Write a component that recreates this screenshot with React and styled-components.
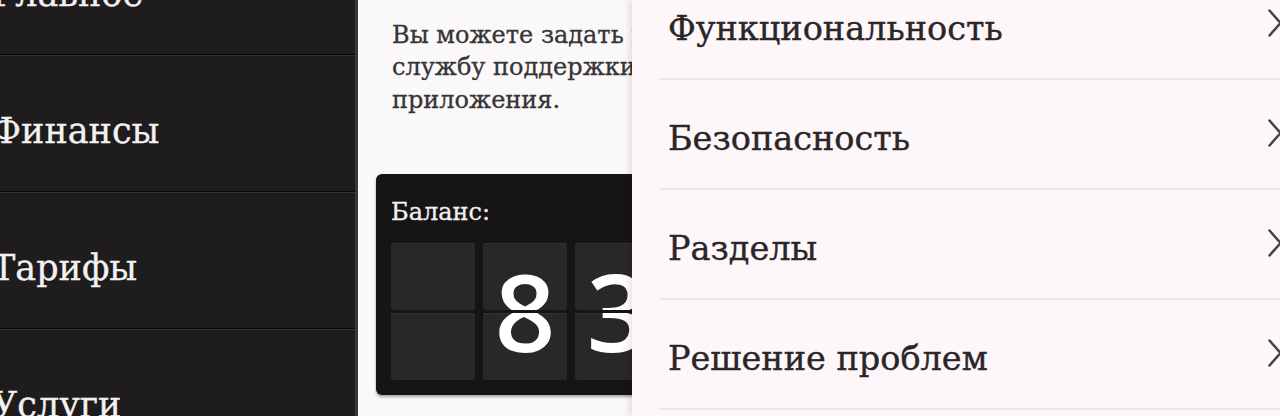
import React from "react";
import styled, { createGlobalStyle } from "styled-components";

const GlobalStyle = createGlobalStyle`
  html, body {
    margin: 0;
    padding: 0;
  }
  body {
    width: 1280px;
    height: 416px;
    overflow: hidden;
    background: #fbf8fa;
  }
`;

const Screen = styled.div`
  display: flex;
  width: 1280px;
  height: 416px;
  overflow: hidden;
  font-family: "DejaVu Serif", "Liberation Serif", serif;
`;

/* left dark menu */
const Sidebar = styled.nav`
  flex: 0 0 355px;
  background: #1f1c1d;
  border-right: 3px solid #393637;
  overflow: hidden;
`;

const SideList = styled.div`
  display: flex;
  flex-direction: column;
  margin-top: -82px;
`;

const SideItem = styled.div`
  box-sizing: border-box;
  height: 137px;
  display: flex;
  align-items: center;
  padding-top: 14px;
  border-top: 1px solid #353132;
  border-bottom: 1px solid #0b090a;
`;

const SideLabel = styled.span`
  margin-left: -8px;
  font-size: 35px;
  color: #f3f1f1;
  -webkit-text-stroke: 0.4px #f3f1f1;
  text-shadow: 0 0 1px #000;
  white-space: nowrap;
`;

/* middle info column */
const Middle = styled.section`
  flex: 0 0 274px;
  background: #fbf8fa;
  overflow: hidden;
`;

const MiddleInner = styled.div`
  width: 360px;
`;

const Heading = styled.p`
  margin: -29px 0 15px 34px;
  font-size: 24px;
  line-height: 32.5px;
  color: #363435;
  white-space: nowrap;
`;

const Text = styled.p`
  margin: 0 0 0 34px;
  font-size: 24px;
  line-height: 32.5px;
  color: #363435;
  -webkit-text-stroke: 0.3px #363435;
  white-space: nowrap;
`;

const BalanceCard = styled.div`
  margin: 58px 0 0 18px;
  width: 380px;
  padding: 24px 0 15px 15px;
  background: #171415;
  border-radius: 6px;
  box-shadow: 0 2px 3px rgba(0, 0, 0, 0.35);
`;

const BalanceLabel = styled.div`
  font-size: 24px;
  line-height: 28px;
  color: #f2f0f0;
  -webkit-text-stroke: 0.3px #f2f0f0;
  margin-bottom: 17px;
`;

const Tiles = styled.div`
  display: flex;
  gap: 8px;
`;

const FlipDigit = styled.div`
  display: flex;
  flex-direction: column;
  gap: 3px;
  width: 84px;
`;

const Half = styled.div`
  height: 67px;
  background: #2a2728;
  border-radius: 2px;
  overflow: hidden;
  box-shadow: inset 0 1px 0 rgba(255, 255, 255, 0.05);
`;

const Face = styled.div`
  height: 137px;
  line-height: 137px;
  margin-top: ${(p) => (p.$bottom ? "-70px" : "0")};
  text-align: center;
  font-family: "Open Sans", "Liberation Sans", sans-serif;
  font-size: 106px;
  font-weight: 600;
  color: #ffffff;
`;

/* right settings list */
const Panel = styled.section`
  flex: 1;
  position: relative;
  z-index: 1;
  background: #fdf7fa;
  box-shadow: -3px 0 6px rgba(0, 0, 0, 0.1);
  overflow: hidden;
`;

const MenuList = styled.div`
  display: flex;
  flex-direction: column;
  margin: -30px -2px 0 28px;
`;

const MenuRow = styled.div`
  box-sizing: border-box;
  height: 110px;
  display: flex;
  align-items: center;
  justify-content: space-between;
  padding: 8px 0 0 8px;
  border-bottom: 2px solid #f2e2e8;
`;

const MenuLabel = styled.span`
  font-size: 33.5px;
  color: #2a2628;
  -webkit-text-stroke: 0.4px #2a2628;
`;

const Chevron = styled.svg`
  width: 14px;
  height: 28px;
  margin-bottom: 10px;
  flex-shrink: 0;
`;

const sideItems = ["Главное", "Финансы", "Тарифы", "Услуги"];
const menuItems = ["Функциональность", "Безопасность", "Разделы", "Решение проблем"];
const digits = ["", "8", "3", "0"];

function App() {
  return (
    <>
      <GlobalStyle />
      <Screen>
        <Sidebar>
          <SideList>
            {sideItems.map((item) => (
              <SideItem key={item}>
                <SideLabel>{item}</SideLabel>
              </SideItem>
            ))}
          </SideList>
        </Sidebar>

        <Middle>
          <MiddleInner>
            <Heading>Есть вопросы по работе?</Heading>
            <Text>Вы можете задать вопрос в</Text>
            <Text>службу поддержки прямо из</Text>
            <Text>приложения.</Text>
            <BalanceCard>
              <BalanceLabel>Баланс:</BalanceLabel>
              <Tiles>
                {digits.map((d, i) => (
                  <FlipDigit key={i}>
                    <Half>
                      <Face>{d}</Face>
                    </Half>
                    <Half>
                      <Face $bottom>{d}</Face>
                    </Half>
                  </FlipDigit>
                ))}
              </Tiles>
            </BalanceCard>
          </MiddleInner>
        </Middle>

        <Panel>
          <MenuList>
            {menuItems.map((item) => (
              <MenuRow key={item}>
                <MenuLabel>{item}</MenuLabel>
                <Chevron viewBox="0 0 14 28">
                  <polyline
                    points="1.5,1.5 12.5,14 1.5,26.5"
                    fill="none"
                    stroke="#454244"
                    strokeWidth="2.5"
                    strokeLinecap="round"
                    strokeLinejoin="round"
                  />
                </Chevron>
              </MenuRow>
            ))}
          </MenuList>
        </Panel>
      </Screen>
    </>
  );
}

export default App;
